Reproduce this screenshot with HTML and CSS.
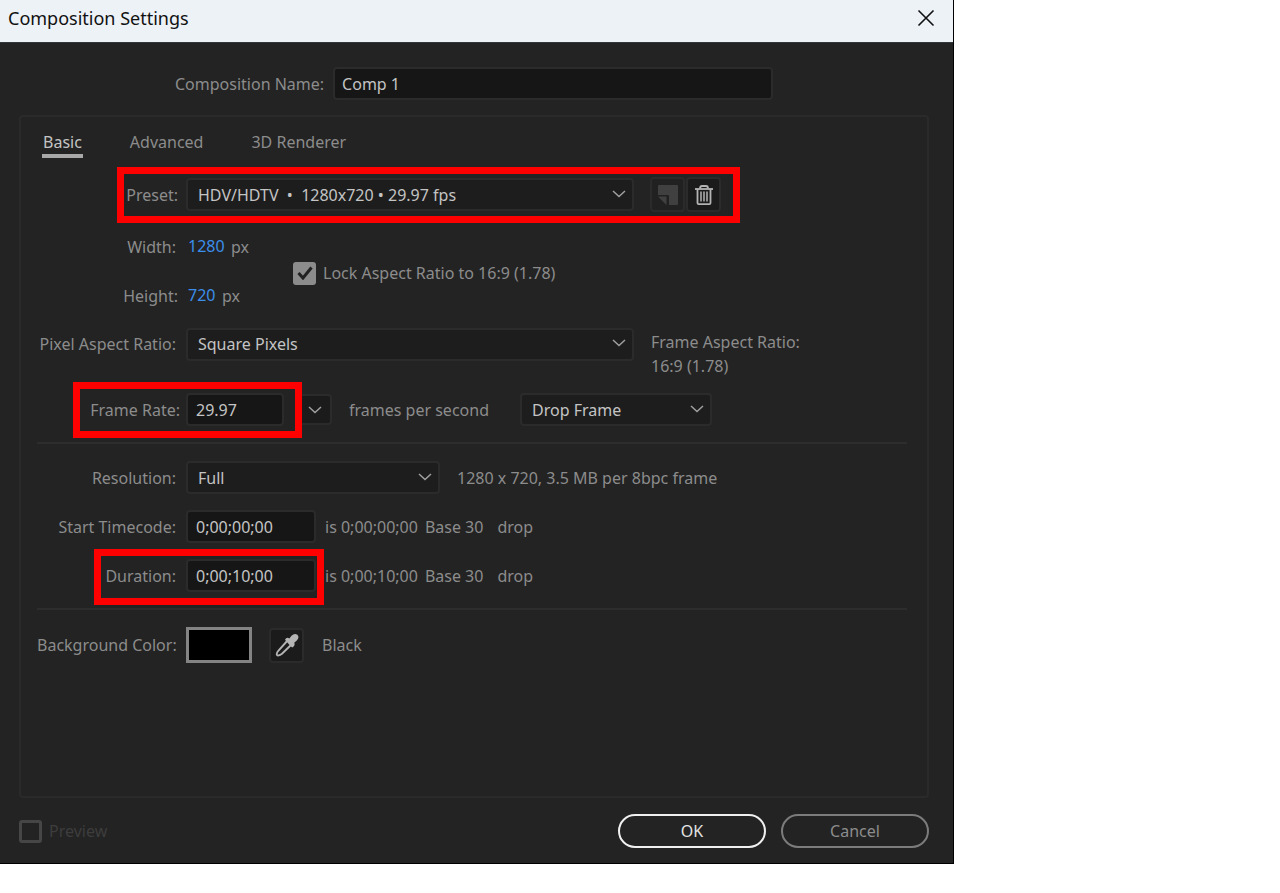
FILE: index.html
```html
<!DOCTYPE html>
<html lang="en">
<head>
<meta charset="utf-8">
<title>Composition Settings</title>
<link rel="stylesheet" href="styles.css">
</head>
<body>
<main class="dialog">
  <header class="titlebar">
    <h1 class="title">Composition Settings</h1>
    <button class="close" type="button" aria-label="Close">
      <svg width="18" height="18" viewBox="0 0 18 18"><path d="M1.5 1.5l15 15M16.5 1.5l-15 15" fill="none" stroke="#111" stroke-width="1.6"/></svg>
    </button>
  </header>

  <form class="body">
    <div class="name-row">
      <label class="name-label" for="name">Composition Name:</label>
      <input class="field name-field" id="name" type="text" value="Comp 1">
    </div>

    <section class="panel">
      <nav class="tabs">
        <button class="tab tab-active" type="button">Basic</button>
        <button class="tab" type="button">Advanced</button>
        <button class="tab" type="button">3D Renderer</button>
      </nav>

      <div class="row row-preset">
        <label class="label label-near" for="preset">Preset:</label>
        <div class="select select-wide">
          <select id="preset"><option>HDV/HDTV &nbsp;•&nbsp; 1280x720 • 29.97 fps</option></select>
          <svg class="chevron" width="16" height="8" viewBox="0 0 16 8"><path d="M2 1l6 5.5L14 1"/></svg>
        </div>
        <div class="tools">
          <button class="tool tool-off" type="button" aria-label="Save preset" disabled>
            <svg width="20" height="20" viewBox="0 0 20 20"><path d="M1 0h18q1 0 1 1v18q0 1-1 1h-8v-9q0-1-1-1H0V1q0-1 1-1zM0 11.500h8.500V20z" fill="#404040"/></svg>
          </button>
          <button class="tool" type="button" aria-label="Delete preset">
            <svg width="20" height="22" viewBox="0 0 20 22" fill="none" stroke="#b4b4b4"><path d="M1 5h18" stroke-width="1.800"/><path d="M6 4.500Q6 2 8 2h4q2 0 2 2.500M3.500 5v14q0 1.200 1.200 1.200h10.600q1.200 0 1.200-1.200V5" stroke-width="1.800"/><path d="M7 7.500v10M10 7.500v10M13 7.500v10" stroke-width="1.500"/></svg>
          </button>
        </div>
        <span class="mark mark-preset"></span>
      </div>

      <div class="size">
        <div class="size-fields">
          <div class="row">
            <label class="label" for="width">Width:</label>
            <input class="number number-4" id="width" type="text" value="1280"><span>px</span>
          </div>
          <div class="row">
            <label class="label label-near" for="height">Height:</label>
            <input class="number number-3" id="height" type="text" value="720"><span>px</span>
          </div>
        </div>
        <label class="check check-lock">
          <input class="box box-lock" type="checkbox" checked>
          <svg class="tick" width="16" height="14" viewBox="0 0 16 14"><path d="M1.500 7l4.500 5L14.500 1.500" fill="none" stroke="#222" stroke-width="3"/></svg>
          <span>Lock Aspect Ratio to 16:9 (1.78)</span>
        </label>
      </div>

      <div class="row row-par">
        <label class="label" for="par">Pixel Aspect Ratio:</label>
        <div class="select select-wide">
          <select id="par"><option>Square Pixels</option></select>
          <svg class="chevron" width="16" height="8" viewBox="0 0 16 8"><path d="M2 1l6 5.500L14 1"/></svg>
        </div>
        <p class="aspect">Frame Aspect Ratio:<br>16:9 (1.78)</p>
      </div>

      <div class="row row-rate">
        <label class="label label-nearest" for="rate">Frame Rate:</label>
        <input class="field field-rate" id="rate" type="text" value="29.97">
        <button class="rate-menu" type="button" aria-label="Frame rate list">
          <svg class="chevron-plain" width="16" height="8" viewBox="0 0 16 8"><path d="M2 1l6 5.500L14 1"/></svg>
        </button>
        <span class="rate-unit">frames per second</span>
        <div class="select select-drop">
          <select aria-label="Timecode mode"><option>Drop Frame</option></select>
          <svg class="chevron" width="16" height="8" viewBox="0 0 16 8"><path d="M2 1l6 5.500L14 1"/></svg>
        </div>
        <span class="mark mark-rate"></span>
      </div>

      <hr class="rule">

      <div class="row">
        <label class="label" for="resolution">Resolution:</label>
        <div class="select select-res">
          <select id="resolution"><option>Full</option></select>
          <svg class="chevron" width="16" height="8" viewBox="0 0 16 8"><path d="M2 1l6 5.500L14 1"/></svg>
        </div>
        <span class="res-note">1280 x 720, 3.5 MB per 8bpc frame</span>
      </div>

      <div class="row row-time">
        <label class="label" for="start">Start Timecode:</label>
        <input class="field field-time" id="start" type="text" value="0;00;00;00">
        <span class="note"><span>is 0;00;00;00</span><span>Base 30</span><span class="drop">drop</span></span>
      </div>

      <div class="row row-time">
        <label class="label" for="duration">Duration:</label>
        <input class="field field-time" id="duration" type="text" value="0;00;10;00">
        <span class="note"><span>is 0;00;10;00</span><span>Base 30</span><span class="drop">drop</span></span>
        <span class="mark mark-duration"></span>
      </div>

      <hr class="rule">

      <div class="row">
        <label class="label" for="swatch">Background Color:</label>
        <button class="swatch" id="swatch" type="button"></button>
        <button class="tool tool-pick" type="button" aria-label="Pick color">
          <svg width="24" height="24" viewBox="0 0 24 24"><path d="M13 7L3.500 17.500Q1 20.500 2 22t5-1.200L17 11" fill="none" stroke="#b4b4b4" stroke-width="1.900"/><path d="M10 6.800q1.500-3 4.300-1.400l2.200-2.600Q19.500-.3 22.400 1.800q2.400 2.700-.6 5.600L19.200 9.800q1.400 2.800-1.800 4.600L15.800 13.400z" fill="#b4b4b4"/></svg>
        </button>
        <span>Black</span>
      </div>
    </section>

    <footer class="footer">
      <label class="check preview">
        <input class="box box-preview" type="checkbox" disabled>
        <span>Preview</span>
      </label>
      <div class="actions">
        <button class="pill pill-ok" type="button">OK</button>
        <button class="pill" type="button">Cancel</button>
      </div>
    </footer>
  </form>
</main>
</body>
</html>
```
FILE: styles.css
```css
* { box-sizing: border-box; }

body {
  margin: 0;
  background: #fff;
  color: #8c8c8c;
  font: 16px/24px "Noto Sans", "Open Sans", sans-serif;
}

button, input, select { font: inherit; color: inherit; margin: 0; }
button { padding: 0; background: none; border: 0; }
p, h1 { margin: 0; }
svg { display: block; }

.dialog {
  max-width: 954px;
  background: #232323;
  border-right: 1px solid #000;
  border-bottom: 1px solid #000;
}

.titlebar {
  display: flex;
  align-items: center;
  justify-content: space-between;
  height: 43px;
  padding: 0 18px 6px 8px;
  background: #edf2f7;
  border-bottom: 1px solid #30363a;
  color: #111;
}
.title { font-size: 18px; font-weight: 400; }

.body { padding: 24px 24px 15px 19px; }

.name-row {
  display: flex;
  align-items: center;
  gap: 9px;
  padding-left: 156px;
}
.name-field { width: 440px; }

.field {
  height: 33px;
  padding: 0 8px;
  background: #161616;
  border: 2px solid #2b2b2b;
  border-radius: 4px;
  color: #c4c4c4;
}
.name-field { padding: 0 7px; }

.panel {
  min-height: 683px;
  margin-top: 15px;
  padding: 12px 20px 12px 16px;
  border: 2px solid #2a2a2a;
  border-radius: 4px;
}

.tabs { display: flex; gap: 46px; padding-left: 5px; }
.tab { height: 29px; padding: 0 1px; border-bottom: 4px solid transparent; }
.tab-active { color: #c4c4c4; border-color: #a8a8a8; }

.row {
  position: relative;
  display: flex;
  align-items: center;
}
.label { width: 139px; margin-right: 10px; text-align: right; white-space: nowrap; }
.label-near { width: 141px; margin-right: 8px; }
.label-nearest { width: 143px; margin-right: 6px; }
.row-preset { margin-top: 19px; }

.select { display: grid; align-items: center; }
.select select {
  grid-area: 1 / 1;
  width: 100%;
  height: 33px;
  padding: 0 10px;
  appearance: none;
  background: #1d1d1d;
  border: 2px solid #2b2b2b;
  border-radius: 4px;
  color: #c4c4c4;
}
.chevron { grid-area: 1 / 1; justify-self: end; margin: 0 7px 2px 0; pointer-events: none; }
.chevron path, .chevron-plain path { fill: none; stroke: #a0a0a0; stroke-width: 1.500; }
.select-wide { width: 448px; }
.select-drop { width: 192px; margin-left: 31px; }
.select-res { width: 254px; }

.tools { display: flex; gap: 1px; margin-left: 16px; }
.tool {
  display: grid;
  place-items: center;
  width: 35px;
  height: 35px;
  background: #1b1b1b;
  border: 2px solid #2b2b2b;
  border-radius: 4px;
}
.tool-off { background: #212121; }

.mark { position: absolute; height: 56px; border: 7px solid #f00; pointer-events: none; }
.mark-preset { left: 80px; top: -10px; width: 623px; }
.mark-rate { left: 36px; top: -11px; width: 229px; }
.mark-duration { left: 57px; top: -10px; width: 230px; }

.size { display: flex; align-items: center; margin-top: 23px; }
.size-fields { display: grid; gap: 25px; width: 256px; }
.number { height: 24px; padding: 0 0 2px 2px; background: none; border: 0; color: #3b8eea; }
.number-4 { width: 45px; }
.number-3 { width: 36px; }

.check { display: grid; grid-template-columns: 23px auto; align-items: center; column-gap: 7px; }
.check-lock { padding-top: 3px; }
.box { grid-area: 1 / 1; appearance: none; width: 23px; height: 23px; border-radius: 3px; }
.box-lock { background: #8c8c8c; }
.tick { grid-area: 1 / 1; justify-self: center; pointer-events: none; }

.row-par { margin-top: 2px; }
.aspect { margin-left: 17px; padding-top: 20px; }

.row-rate { margin-top: 15px; }
.field-rate { width: 98px; }
.rate-menu {
  display: grid;
  place-items: center;
  width: 34px;
  height: 31px;
  margin-left: 14px;
  background: #1b1b1b;
  border: 2px solid #2b2b2b;
  border-radius: 4px;
}
.rate-unit { margin-left: 17px; }

.rule { height: 2px; margin: 16px 0 17px; background: #2d2d2d; border: 0; }

.res-note { margin-left: 17px; }
.row-time { margin-top: 16px; }
.field-time { width: 130px; }
.note { display: flex; gap: 7px; margin-left: 9px; }
.drop { margin-left: 7px; }

.swatch { width: 66px; height: 36px; background: #000; border: 3px solid #848484; }
.tool-pick { margin: 0 18px 0 17px; }

.footer { display: flex; align-items: center; justify-content: space-between; margin-top: 16px; }
.preview { color: #3d3d3d; }
.box-preview { border: 3px solid #464646; }
.actions { display: flex; gap: 15px; }
.pill { width: 148px; height: 34px; border: 2px solid #7c7c7c; border-radius: 17px; }
.pill-ok { border-color: #f0f0f0; color: #e4e4e4; }
```
